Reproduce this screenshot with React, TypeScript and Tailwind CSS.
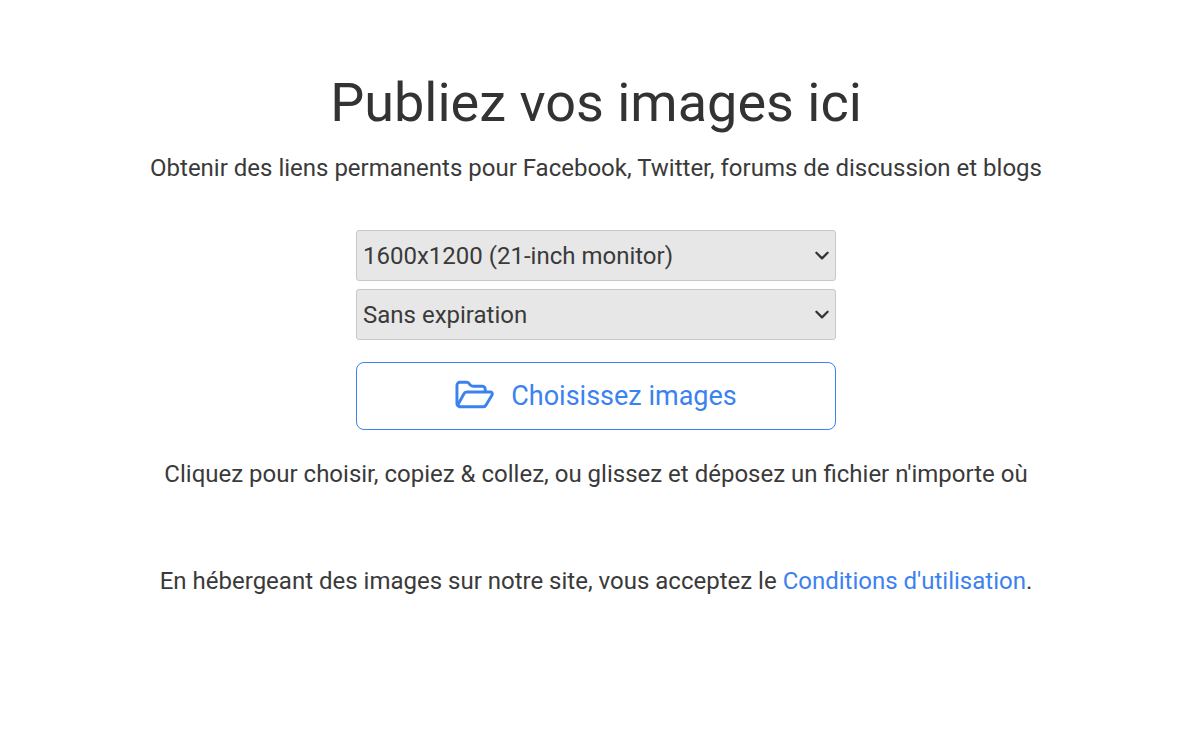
function Dropdown({ label }: { label: string }) {
  return (
    <div className="relative w-[480px] h-[51px]">
      <select className="w-full h-full appearance-none bg-[#e7e7e7] border border-[#c8c8c8] rounded-[3px] pl-[6px] text-[24px] text-[#3a3a3a] outline-none">
        <option>{label}</option>
      </select>
      <svg
        viewBox="0 0 16 16"
        className="absolute right-[5px] top-[16px] w-[18px] h-[18px] pointer-events-none"
        fill="none"
        stroke="#333333"
        strokeWidth="2"
        strokeLinecap="round"
        strokeLinejoin="round"
      >
        <path d="M3 6l5 5 5-5" />
      </svg>
    </div>
  );
}

export default function App() {
  return (
    <div className="min-h-[741px] bg-white text-[#3a3a3a] font-['Roboto',sans-serif] flex flex-col items-center pt-[67px] pl-[13px]">
      <h1 className="text-[54px] leading-[72px] font-normal text-[#333333]">Publiez vos images ici</h1>
      <p className="text-[24px] leading-[32px] mt-[13px]">
        Obtenir des liens permanents pour Facebook, Twitter, forums de discussion et blogs
      </p>

      <div className="flex flex-col gap-[8px] mt-[46px]">
        <Dropdown label="1600x1200 (21-inch monitor)" />
        <Dropdown label="Sans expiration" />
      </div>

      <button className="w-[480px] h-[68px] mt-[22px] border border-[#3b82f0] rounded-[8px] flex items-center justify-center gap-[17px] text-[27px] text-[#3b82f0]">
        <svg
          viewBox="0 0 40 29"
          className="w-[39px] h-[29px] mb-[3px]"
          fill="none"
          stroke="#3b82f0"
          strokeWidth="3"
          strokeLinecap="round"
          strokeLinejoin="round"
        >
          <path d="M5 27A3 3 0 0 1 2 24V5A3 3 0 0 1 5 2H12Q14 2 15 4L16 5Q17 6 19 6H28A3 3 0 0 1 31 9V11" />
          <path d="M5 27H29Q31 27 32 25L38 15Q39 12 36 12H12Q10 12 9 14L3 25" />
        </svg>
        Choisissez images
      </button>

      <p className="text-[24px] leading-[32px] mt-[28px]">
        Cliquez pour choisir, copiez &amp; collez, ou glissez et déposez un fichier n'importe où
      </p>

      <p className="text-[24px] leading-[32px] mt-[75px]">
        En hébergeant des images sur notre site, vous acceptez le{" "}
        <a className="text-[#3b82f0]">Conditions d'utilisation</a>.
      </p>
    </div>
  );
}
